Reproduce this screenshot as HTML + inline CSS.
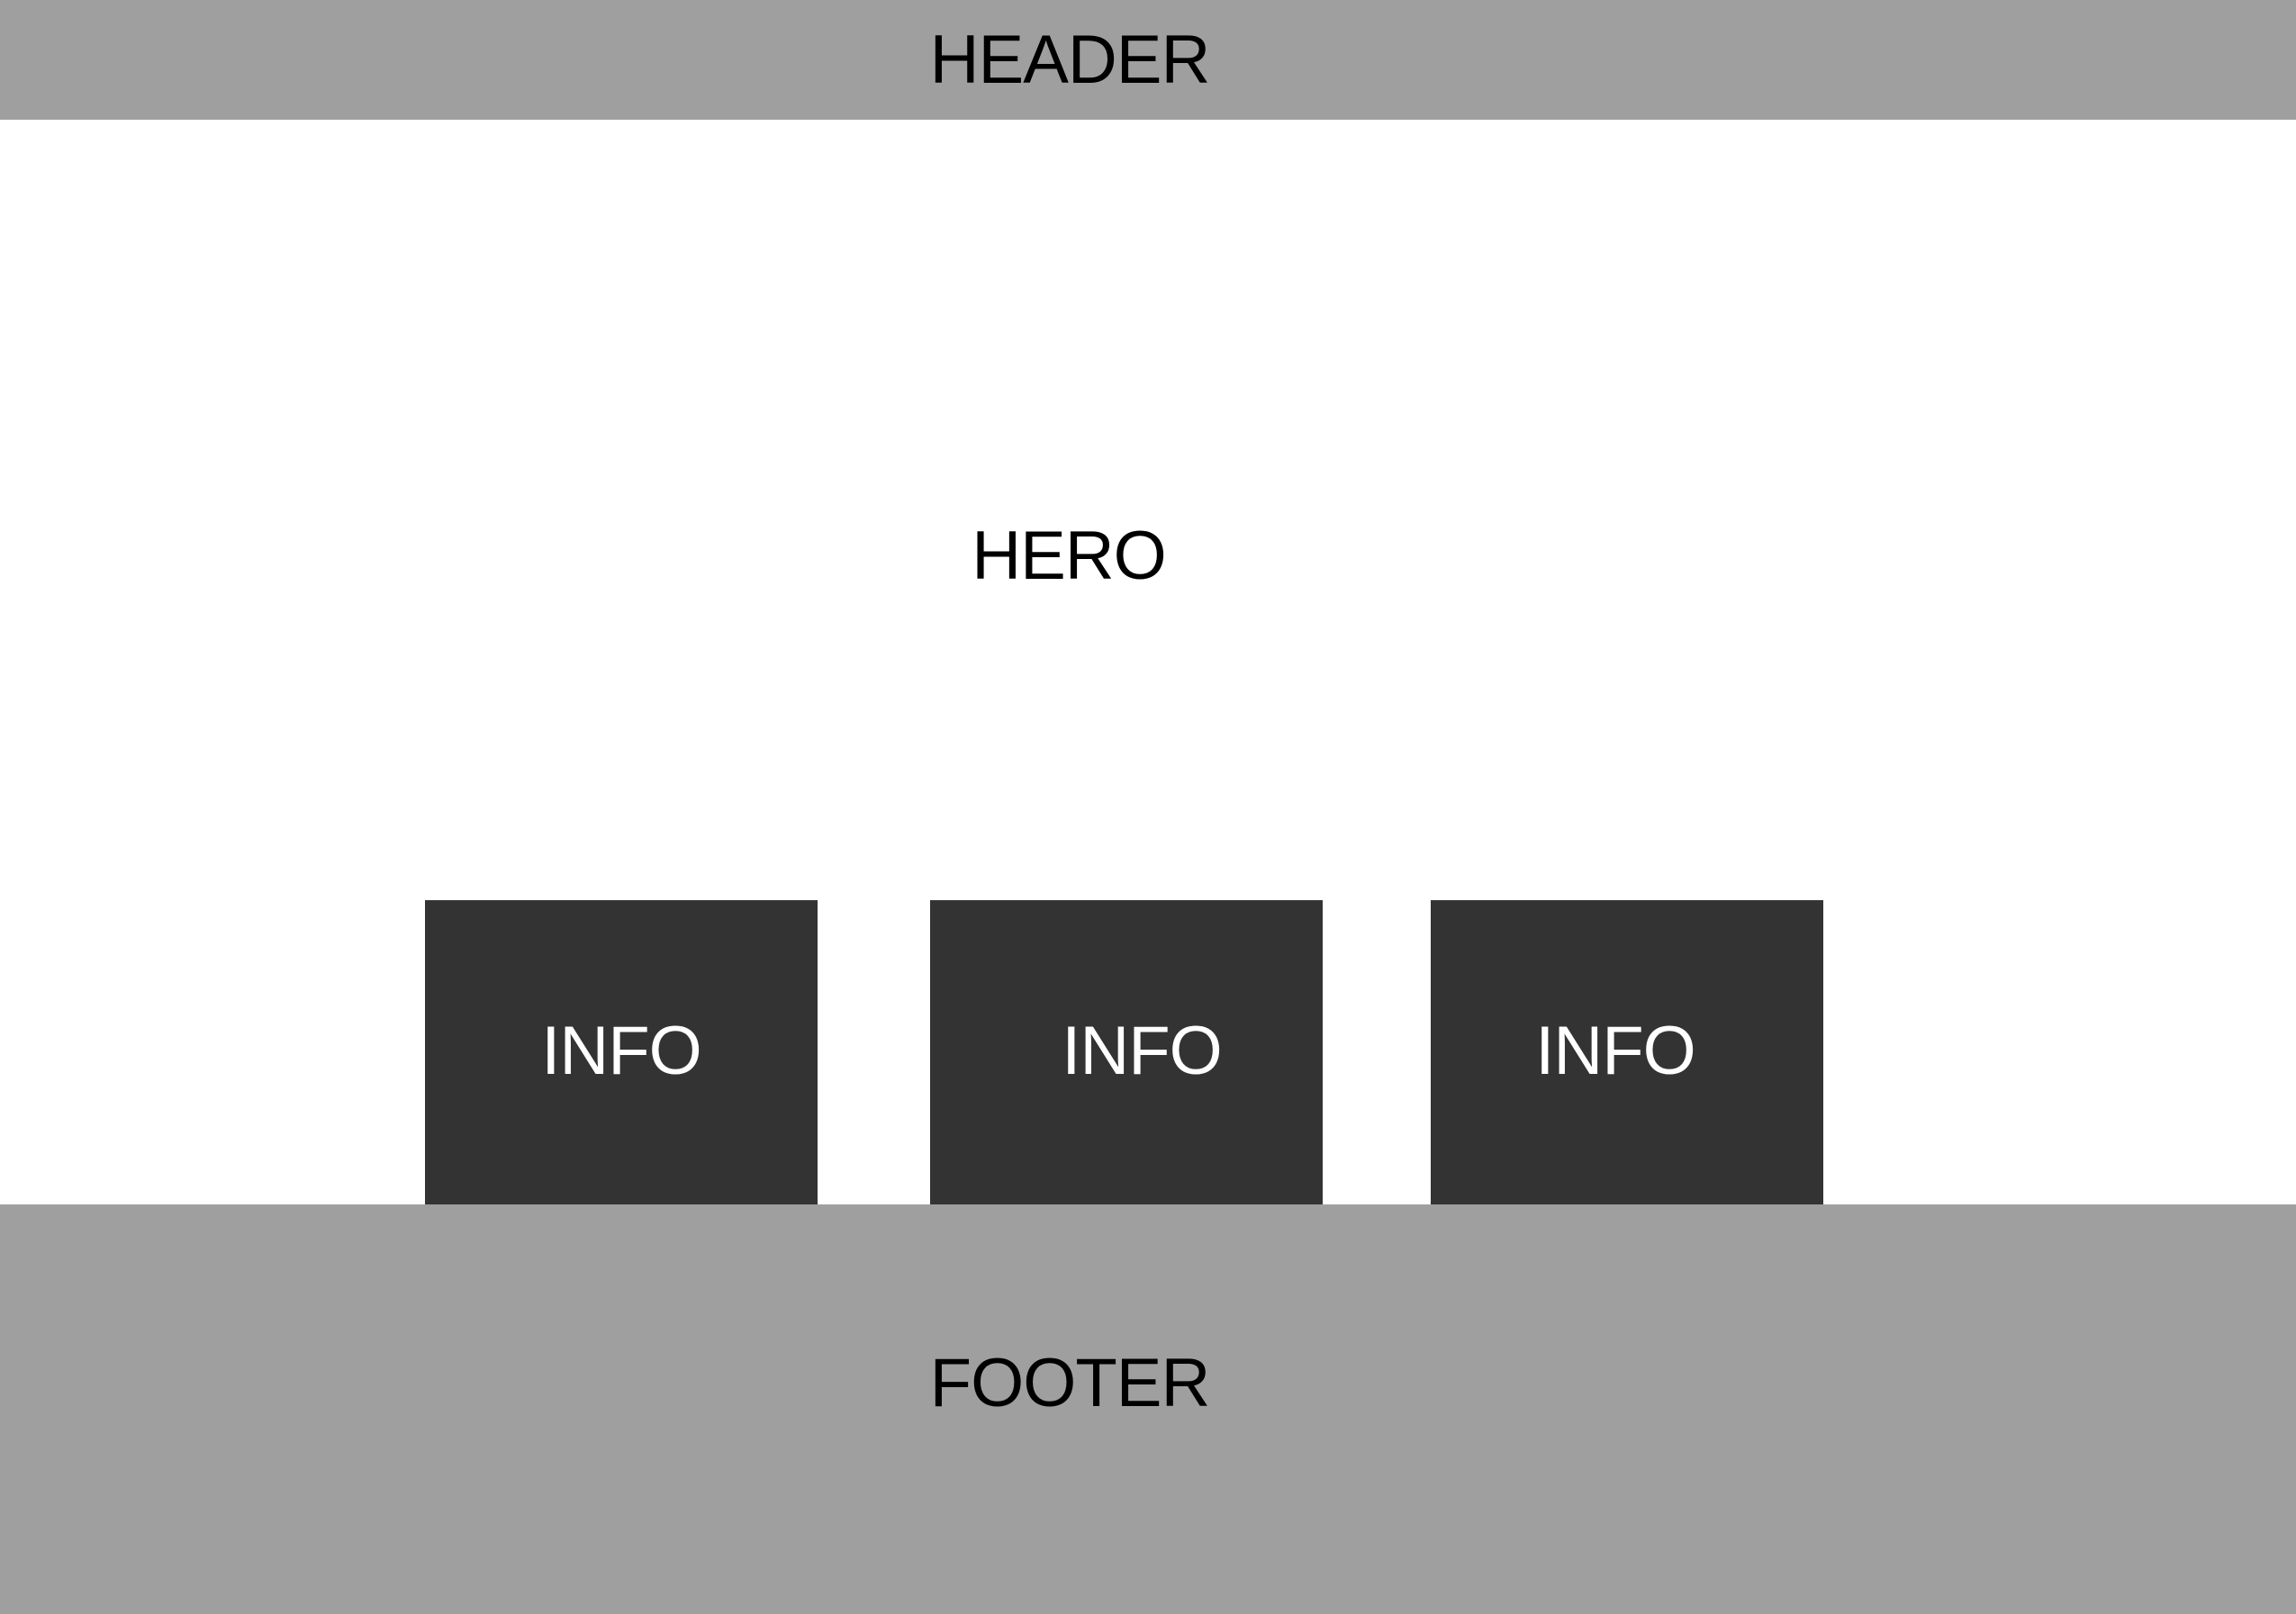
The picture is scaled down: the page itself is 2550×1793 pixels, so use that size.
<!DOCTYPE html>
<html><head><meta charset="utf-8"><style>
html,body{margin:0;padding:0;width:2550px;height:1793px;overflow:hidden;background:#fff;font-family:"Liberation Sans",sans-serif;}
.a{position:absolute;}
.t{position:absolute;transform:translate(-50%,-50%);font-size:76px;line-height:1;white-space:nowrap;color:#000;letter-spacing:-1px;}
.box{position:absolute;top:1000px;height:338px;background:#333;}
</style></head><body>
<div class="a" style="left:0;top:0;width:2550px;height:133px;background:#9f9f9f"></div>
<div class="t" style="left:1188px;top:67px">HEADER</div>
<div class="t" style="left:1187px;top:618px">HERO</div>
<div class="box" style="left:472px;width:436px"></div>
<div class="box" style="left:1033px;width:436px"></div>
<div class="box" style="left:1589px;width:436px"></div>
<div class="t" style="left:690px;top:1168px;color:#fff">INFO</div>
<div class="t" style="left:1268px;top:1168px;color:#fff">INFO</div>
<div class="t" style="left:1794px;top:1168px;color:#fff">INFO</div>
<div class="a" style="left:0;top:1338px;width:2550px;height:455px;background:#9f9f9f"></div>
<div class="t" style="left:1188px;top:1537px">FOOTER</div>
</body></html>
